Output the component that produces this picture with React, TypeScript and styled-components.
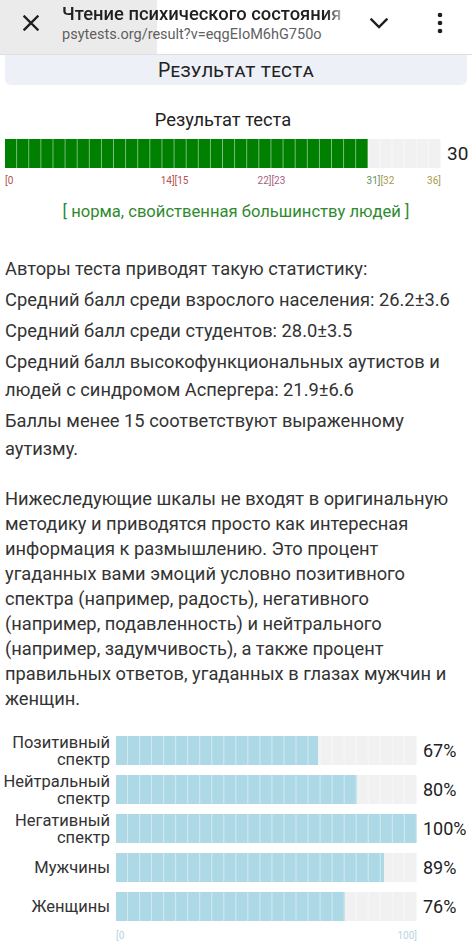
import React from "react";
import styled, { createGlobalStyle } from "styled-components";

const GlobalStyle = createGlobalStyle`
  * { box-sizing: border-box; }
  html, body { margin: 0; padding: 0; background: #ffffff; }
  body { font-family: Roboto, "Noto Sans", "Liberation Sans", sans-serif; color: #333333; }
`;

const Header = styled.header`
  height: 55px;
  display: flex;
  align-items: center;
  border-bottom: 1px solid #dedede;
  background: linear-gradient(to right, #ebebeb 157px, #ffffff 157px);
`;

const CloseButton = styled.div`
  width: 62px;
  height: 54px;
  display: flex;
  align-items: center;
  justify-content: center;
  padding-bottom: 8px;
  flex-shrink: 0;
`;

const TitleBlock = styled.div`
  flex: 1;
  min-width: 0;
  display: flex;
  flex-direction: column;
  padding-bottom: 8px;
`;

const Title = styled.div`
  font-size: 18.4px;
  font-weight: 500;
  color: #1f1f1f;
  white-space: nowrap;
  overflow: hidden;
  width: 284px;
  line-height: 24px;
  -webkit-mask-image: linear-gradient(to right, #000 264px, transparent 286px);
  mask-image: linear-gradient(to right, #000 264px, transparent 286px);
`;

const Url = styled.div`
  font-size: 14.5px;
  color: #5f5f5f;
  white-space: nowrap;
  line-height: 18px;
`;

const IconButton = styled.div<{ $w: number }>`
  width: ${(p) => p.$w}px;
  height: 54px;
  display: flex;
  align-items: center;
  justify-content: center;
  flex-shrink: 0;
  padding-bottom: 8px;
`;

const Main = styled.main`
  padding: 0 5px;
`;

const TopBox = styled.div`
  height: 30px;
  background: #eef0f8;
  border-radius: 0 0 6px 6px;
  display: flex;
  align-items: center;
  justify-content: center;
  font-size: 19.5px;
  font-variant: small-caps;
  color: #222222;
  letter-spacing: 0.3px;
`;

const ResultGrid = styled.div`
  display: grid;
  grid-template-columns: 436px 1fr;
  margin-top: 24px;
`;

const ResultHeading = styled.div`
  font-size: 18.3px;
  line-height: 21px;
  text-align: center;
  color: #222222;
  margin-bottom: 9px;
`;

const Track = styled.div<{ $pct: number; $segments: number; $fill: string }>`
  height: 29px;
  background-image: linear-gradient(
      to right,
      transparent calc(100% - 1px),
      rgba(255, 255, 255, 0.5) calc(100% - 1px)
    ),
    linear-gradient(
      to right,
      ${(p) => p.$fill} ${(p) => p.$pct}%,
      #f1f1f1 ${(p) => p.$pct}%
    );
  background-size: calc(100% / ${(p) => p.$segments}) 100%, 100% 100%;
  background-repeat: repeat-x, no-repeat;
`;

const Score = styled.div`
  font-size: 19px;
  color: #222222;
  display: flex;
  align-items: center;
  padding-left: 6px;
`;

const Scale = styled.div`
  position: relative;
  height: 24px;
`;

const Tick = styled.span<{ $align: "left" | "center" | "right" }>`
  position: absolute;
  top: 7px;
  font-size: 10px;
  line-height: 12px;
  white-space: nowrap;
  transform: ${(p) =>
    p.$align === "center" ? "translateX(-50%)" : p.$align === "right" ? "translateX(-100%)" : "none"};
`;

const TickPart = styled.span<{ $color: string }>`
  color: ${(p) => p.$color};
`;

const Verdict = styled.div`
  text-align: center;
  font-size: 16.6px;
  line-height: 20px;
  color: #2f8a2f;
  margin-top: 10px;
`;

const Stats = styled.section`
  margin-top: 33px;
`;

const StatLine = styled.p`
  margin: 0 0 3px;
  font-size: 18.3px;
  line-height: 28px;
  color: #333333;
`;

const Description = styled.p`
  margin: 23px 0 0;
  font-size: 18.3px;
  line-height: 25px;
  color: #333333;
`;

const Chart = styled.div`
  display: grid;
  grid-template-columns: 105px 301px auto;
  column-gap: 6px;
  row-gap: 10px;
  margin-top: 25px;
  align-items: center;
`;

const ChartLabel = styled.div`
  height: 29px;
  display: flex;
  flex-direction: column;
  align-items: flex-end;
  justify-content: center;
  text-align: right;
  font-size: 16.5px;
  line-height: 17px;
  color: #333333;
`;

const LabelLine = styled.div`
  white-space: nowrap;
`;

const Percent = styled.div`
  font-size: 18px;
  color: #222222;
`;

const ChartScale = styled.div`
  grid-column: 2;
  display: flex;
  justify-content: space-between;
  font-size: 10px;
  line-height: 12px;
  color: #b7d6e2;
  margin-top: -1px;
`;

const CloseIcon = () => (
  <svg width="16" height="16" viewBox="0 0 16 16">
    <path d="M1.5 1.5 L14.5 14.5 M14.5 1.5 L1.5 14.5" stroke="#1f1f1f" strokeWidth="2.4" strokeLinecap="square" />
  </svg>
);

const ChevronIcon = () => (
  <svg width="18" height="11" viewBox="0 0 18 11">
    <path d="M1.5 1.5 L9 9 L16.5 1.5" stroke="#1f1f1f" strokeWidth="2.4" fill="none" strokeLinecap="square" />
  </svg>
);

const KebabIcon = () => (
  <svg width="6" height="22" viewBox="0 0 6 22">
    <circle cx="3" cy="3" r="2.3" fill="#1f1f1f" />
    <circle cx="3" cy="11" r="2.3" fill="#1f1f1f" />
    <circle cx="3" cy="19" r="2.3" fill="#1f1f1f" />
  </svg>
);

const RED = "#b5504a";
const ROSE = "#a8607c";
const GREEN = "#5e9460";
const OLIVE = "#ab9a45";

type TickDef = { at: number; align: "left" | "center" | "right"; parts: [string, string][] };

const ticks: TickDef[] = [
  { at: 0, align: "left", parts: [["[0", RED]] },
  { at: 14, align: "center", parts: [["14]", RED], ["[15", RED]] },
  { at: 22, align: "center", parts: [["22]", ROSE], ["[23", ROSE]] },
  { at: 31, align: "center", parts: [["31]", GREEN], ["[32", OLIVE]] },
  { at: 36, align: "right", parts: [["36]", OLIVE]] },
];

const stats: string[] = [
  "Авторы теста приводят такую статистику:",
  "Средний балл среди взрослого населения: 26.2±3.6",
  "Средний балл среди студентов: 28.0±3.5",
  "Средний балл высокофункциональных аутистов и людей с синдромом Аспергера: 21.9±6.6",
  "Баллы менее 15 соответствуют выраженному аутизму.",
];

const rows: { label: string[]; value: number }[] = [
  { label: ["Позитивный", "спектр"], value: 67 },
  { label: ["Нейтральный", "спектр"], value: 80 },
  { label: ["Негативный", "спектр"], value: 100 },
  { label: ["Мужчины"], value: 89 },
  { label: ["Женщины"], value: 76 },
];

export default function App() {
  const score = 30;
  const max = 36;
  return (
    <>
      <GlobalStyle />
      <Header>
        <CloseButton>
          <CloseIcon />
        </CloseButton>
        <TitleBlock>
          <Title>Чтение психического состояния</Title>
          <Url>psytests.org/result?v=eqgEIoM6hG750o</Url>
        </TitleBlock>
        <IconButton $w={58}>
          <ChevronIcon />
        </IconButton>
        <IconButton $w={64}>
          <KebabIcon />
        </IconButton>
      </Header>
      <Main>
        <TopBox>Результат теста</TopBox>
        <ResultGrid>
          <ResultHeading>Результат теста</ResultHeading>
          <div />
          <Track $pct={(score / max) * 100} $segments={max} $fill="#008000" />
          <Score>{score}</Score>
          <Scale>
            {ticks.map((t) => (
              <Tick key={t.at} $align={t.align} style={{ left: `${(t.at / max) * 100}%` }}>
                {t.parts.map(([txt, c]) => (
                  <TickPart key={txt} $color={c}>
                    {txt}
                  </TickPart>
                ))}
              </Tick>
            ))}
          </Scale>
          <div />
        </ResultGrid>
        <Verdict>[ норма, свойственная большинству людей ]</Verdict>
        <Stats>
          {stats.map((s) => (
            <StatLine key={s}>{s}</StatLine>
          ))}
        </Stats>
        <Description>
          Нижеследующие шкалы не входят в оригинальную методику и приводятся просто как интересная
          информация к размышлению. Это процент угаданных вами эмоций условно позитивного спектра
          (например, радость), негативного (например, подавленность) и нейтрального (например,
          задумчивость), а также процент правильных ответов, угаданных в глазах мужчин и женщин.
        </Description>
        <Chart>
          {rows.map((r) => (
            <React.Fragment key={r.label.join(" ")}>
              <ChartLabel>
                {r.label.map((l) => (
                  <LabelLine key={l}>{l}</LabelLine>
                ))}
              </ChartLabel>
              <Track $pct={r.value} $segments={25} $fill="#add8e6" />
              <Percent>{r.value}%</Percent>
            </React.Fragment>
          ))}
          <ChartScale>
            <span>[0</span>
            <span>100]</span>
          </ChartScale>
        </Chart>
      </Main>
    </>
  );
}
